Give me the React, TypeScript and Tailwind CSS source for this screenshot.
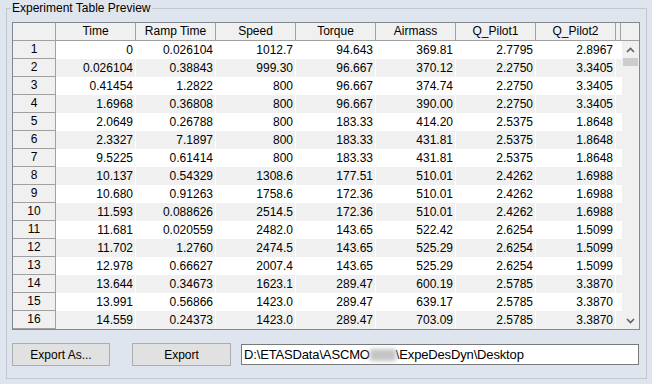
import React from 'react'

const columns = ['Time', 'Ramp Time', 'Speed', 'Torque', 'Airmass', 'Q_Pilot1', 'Q_Pilot2']

const rows: string[][] = [
  ['0', '0.026104', '1012.7', '94.643', '369.81', '2.7795', '2.8967'],
  ['0.026104', '0.38843', '999.30', '96.667', '370.12', '2.2750', '3.3405'],
  ['0.41454', '1.2822', '800', '96.667', '374.74', '2.2750', '3.3405'],
  ['1.6968', '0.36808', '800', '96.667', '390.00', '2.2750', '3.3405'],
  ['2.0649', '0.26788', '800', '183.33', '414.20', '2.5375', '1.8648'],
  ['2.3327', '7.1897', '800', '183.33', '431.81', '2.5375', '1.8648'],
  ['9.5225', '0.61414', '800', '183.33', '431.81', '2.5375', '1.8648'],
  ['10.137', '0.54329', '1308.6', '177.51', '510.01', '2.4262', '1.6988'],
  ['10.680', '0.91263', '1758.6', '172.36', '510.01', '2.4262', '1.6988'],
  ['11.593', '0.088626', '2514.5', '172.36', '510.01', '2.4262', '1.6988'],
  ['11.681', '0.020559', '2482.0', '143.65', '522.42', '2.6254', '1.5099'],
  ['11.702', '1.2760', '2474.5', '143.65', '525.29', '2.6254', '1.5099'],
  ['12.978', '0.66627', '2007.4', '143.65', '525.29', '2.6254', '1.5099'],
  ['13.644', '0.34673', '1623.1', '289.47', '600.19', '2.5785', '3.3870'],
  ['13.991', '0.56866', '1423.0', '289.47', '639.17', '2.5785', '3.3870'],
  ['14.559', '0.24373', '1423.0', '289.47', '703.09', '2.5785', '3.3870'],
]

const Chevron = ({ up }: { up: boolean }) => (
  <svg width="9" height="6" viewBox="0 0 9 6">
    <path
      d={up ? 'M1 5 L4.5 1.5 L8 5' : 'M1 1 L4.5 4.5 L8 1'}
      fill="none"
      stroke="#606060"
      strokeWidth="1.6"
    />
  </svg>
)

export default function App() {
  return (
    <div
      className="w-[652px] h-[384px] bg-[#dfe5ee] pt-[8px] pl-[6px] text-[12px] text-black"
      style={{ fontFamily: '"Liberation Sans", Arial, sans-serif' }}
    >
      {/* Group box */}
      <div className="relative w-[641px] h-[371px] border border-[#c4c8ce] pt-[13px] pl-[5px]">
        <div className="absolute -top-[9px] left-[4px] px-[1px] bg-[#dfe5ee] leading-[16px]">
          Experiment Table Preview
        </div>

        {/* Table */}
        <div className="flex w-[628px] h-[308px] border border-[#828790] bg-white">
          <div className="flex flex-col">
            {/* header */}
            <div className="flex h-[18px] bg-[#f0f0f0] border-b border-[#a0a0a0] leading-[17px]">
              <div className="w-[43px] border-r border-[#a0a0a0]" />
              {columns.map((c) => (
                <div key={c} className="w-[80px] border-r border-[#a0a0a0] text-center">
                  {c}
                </div>
              ))}
              <div className="w-[5px] border-r border-[#a0a0a0]" />
            </div>
            {/* body */}
            {rows.map((r, i) => (
              <div key={i} className="flex h-[18px] leading-[18px]">
                <div className="w-[43px] bg-[#f0f0f0] border-r border-b border-[#a0a0a0] text-center leading-[17px]">
                  {i + 1}
                </div>
                {r.map((v, j) => (
                  <div
                    key={j}
                    className={
                      'w-[80px] text-right pr-[2px] border-r border-white ' +
                      (i % 2 === 1 ? 'bg-[#f0f0f0]' : 'bg-white')
                    }
                  >
                    {v}
                  </div>
                ))}
                <div className={'w-[6px] ' + (i % 2 === 1 ? 'bg-[#f0f0f0]' : 'bg-white')} />
              </div>
            ))}
          </div>
          {/* scrollbar */}
          <div className="flex flex-col w-[17px] bg-[#f0f0f0]">
            <div className="h-[18px] border-b border-[#a0a0a0] bg-[#f0f0f0]" />
            <div className="flex h-[17px] items-center justify-center">
              <Chevron up />
            </div>
            <div className="mx-[1px] h-[8px] bg-[#cdcdcd]" />
            <div className="flex-1" />
            <div className="flex h-[17px] items-center justify-center">
              <Chevron up={false} />
            </div>
          </div>
        </div>

        {/* bottom controls */}
        <div className="flex items-center mt-[13px] h-[23px]">
          <button className="w-[98px] h-[23px] bg-[#e1e1e1] border border-[#adadad] text-[12px]">
            Export As...
          </button>
          <button className="ml-[22px] w-[99px] h-[23px] bg-[#e1e1e1] border border-[#adadad] text-[12px]">
            Export
          </button>
          <div className="ml-[10px] w-[398px] h-[21px] bg-white border border-[#7a7a7a] pl-[2px] text-[13px] tracking-[-0.15px] leading-[19px] flex items-center whitespace-nowrap">
            <span>D:\ETASData\ASCMO</span>
            <span className="inline-block w-[26px] h-[12px] bg-[#c4c4c4] blur-[2px]" />
            <span>\ExpeDesDyn\Desktop</span>
          </div>
        </div>
      </div>
    </div>
  )
}
